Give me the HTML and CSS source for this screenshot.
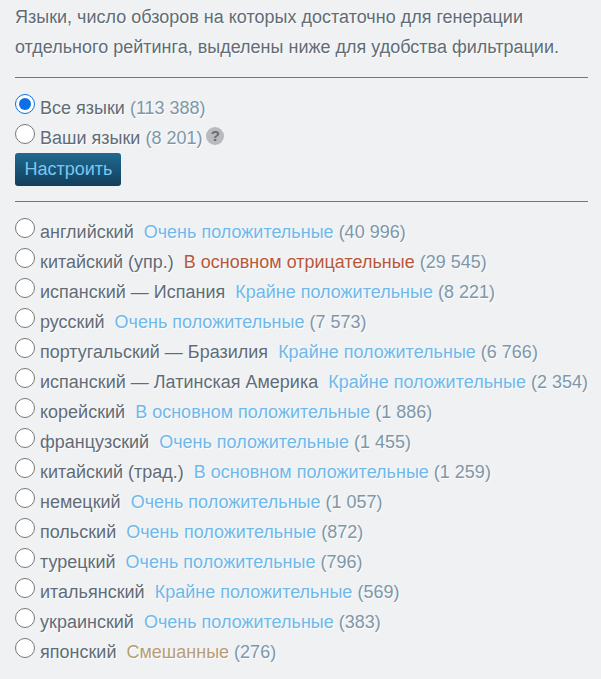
FILE: index.html
```html
<!DOCTYPE html>
<html lang="ru">
<head>
<meta charset="utf-8">
<title>Языки</title>
<link rel="stylesheet" href="styles.css">
</head>
<body>
<main class="panel">
  <p class="intro">Языки, число обзоров на которых достаточно для генерации отдельного рейтинга, выделены ниже для удобства фильтрации.</p>
  <div class="rule rule-first"></div>
  <section class="scope">
    <label class="row"><input type="radio" name="scope" checked><span>Все языки <span class="count">(113 388)</span></span></label>
    <label class="row"><input type="radio" name="scope"><span>Ваши языки <span class="count">(8 201)</span></span><span class="help">?</span></label>
    <button class="btn" type="button">Настроить</button>
  </section>
  <div class="rule"></div>
  <section class="langs">
    <label class="row"><input type="radio" name="lang"><span>английский</span><span class="score pos">Очень положительные</span><span class="count">(40 996)</span></label>
    <label class="row"><input type="radio" name="lang"><span>китайский (упр.)</span><span class="score neg">В основном отрицательные</span><span class="count">(29 545)</span></label>
    <label class="row"><input type="radio" name="lang"><span>испанский — Испания</span><span class="score pos">Крайне положительные</span><span class="count">(8 221)</span></label>
    <label class="row"><input type="radio" name="lang"><span>русский</span><span class="score pos">Очень положительные</span><span class="count">(7 573)</span></label>
    <label class="row"><input type="radio" name="lang"><span>португальский — Бразилия</span><span class="score pos">Крайне положительные</span><span class="count">(6 766)</span></label>
    <label class="row"><input type="radio" name="lang"><span>испанский — Латинская Америка</span><span class="score pos">Крайне положительные</span><span class="count">(2 354)</span></label>
    <label class="row"><input type="radio" name="lang"><span>корейский</span><span class="score pos">В основном положительные</span><span class="count">(1 886)</span></label>
    <label class="row"><input type="radio" name="lang"><span>французский</span><span class="score pos">Очень положительные</span><span class="count">(1 455)</span></label>
    <label class="row"><input type="radio" name="lang"><span>китайский (трад.)</span><span class="score pos">В основном положительные</span><span class="count">(1 259)</span></label>
    <label class="row"><input type="radio" name="lang"><span>немецкий</span><span class="score pos">Очень положительные</span><span class="count">(1 057)</span></label>
    <label class="row"><input type="radio" name="lang"><span>польский</span><span class="score pos">Очень положительные</span><span class="count">(872)</span></label>
    <label class="row"><input type="radio" name="lang"><span>турецкий</span><span class="score pos">Очень положительные</span><span class="count">(796)</span></label>
    <label class="row"><input type="radio" name="lang"><span>итальянский</span><span class="score pos">Крайне положительные</span><span class="count">(569)</span></label>
    <label class="row"><input type="radio" name="lang"><span>украинский</span><span class="score pos">Очень положительные</span><span class="count">(383)</span></label>
    <label class="row"><input type="radio" name="lang"><span>японский</span><span class="score mix">Смешанные</span><span class="count">(276)</span></label>
  </section>
</main>
</body>
</html>
```
FILE: styles.css
```css
html, body {
  margin: 0;
  background: #eff1f3;
}
body {
  font-family: "Liberation Sans", Arial, sans-serif;
  font-size: 18px;
  color: #626c76;
  text-shadow: 1px 1px 1px #fff;
}
.panel {
  padding: 2px 13px 0 15px;
  height: 677px;
  overflow: hidden;
}
.intro {
  margin: 0;
  line-height: 30px;
}
.rule {
  height: 1px;
  background: #2f8cc0;
}
.rule-first {
  margin-top: 15px;
}
.scope {
  padding-top: 15px;
  padding-bottom: 15px;
}
.langs {
  padding-top: 15px;
}
.row {
  display: flex;
  align-items: flex-start;
  height: 30px;
  line-height: 30px;
  white-space: nowrap;
}
.row input {
  flex: none;
  width: 20px;
  height: 20px;
  margin: 1px 5px 0 0;
  accent-color: #0b6fe8;
}
.count {
  color: #7f97a8;
}
.score {
  margin: 0 5px 0 10px;
}
.pos { color: #6fb8ea; }
.neg { color: #b9573a; }
.mix { color: #b89d76; }
.help {
  width: 18px;
  height: 18px;
  margin: 4px 0 0 4px;
  border-radius: 50%;
  background: #b8babd;
  color: #696c70;
  font-size: 15px;
  font-weight: 700;
  line-height: 18px;
  text-align: center;
  text-shadow: none;
}
.btn {
  display: block;
  width: 106px;
  height: 33px;
  padding: 0 0 0 1px;
  border: 0;
  border-radius: 3px;
  background: linear-gradient(to bottom, #1f6a90, #123e5c);
  color: #7cc6f0;
  font: 18px "Liberation Sans", Arial, sans-serif;
  text-shadow: none;
}
```
